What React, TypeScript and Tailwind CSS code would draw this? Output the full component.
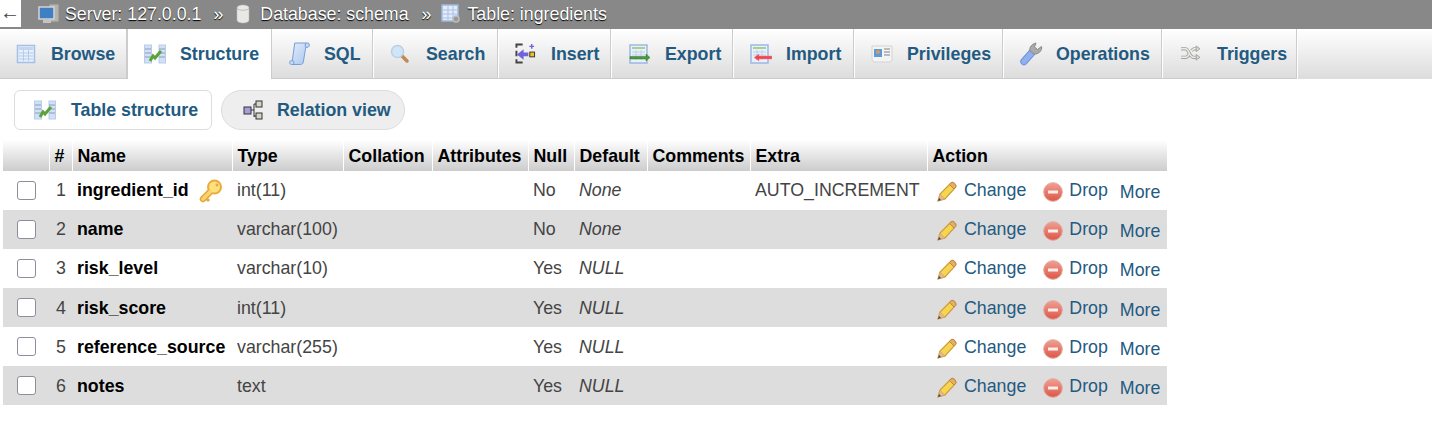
import React from "react";

type IconProps = { className?: string };

const TableIcon = () => (
  <svg viewBox="0 0 20 20" className="w-5 h-5">
    <rect x="1.500" y="1.500" width="17" height="17" fill="#e8f0fb" stroke="#a3bfe8" strokeWidth="1.500" />
    <rect x="3" y="3" width="14" height="3" fill="#c2d6f2" />
    <path d="M3 9h14M3 12h14M3 15h14M7.500 6v11M12.500 6v11" stroke="#b5cbec" />
  </svg>
);

const StructureIcon = ({ className = "w-[22px] h-5" }: IconProps) => (
  <svg viewBox="0 0 22 20" className={className}>
    <rect x="0.500" y="1" width="7" height="18" fill="#cfe0f7" stroke="#b9cdea" />
    <rect x="15" y="1" width="6.500" height="18" fill="#cfe0f7" stroke="#b9cdea" />
    <path d="M1 5h6M1 9h6M1 13h6M15 5h6M15 9h6M15 13h6" stroke="#8f9fb5" />
    <path d="M6 17l3-5 2 2 6-7" fill="none" stroke="#5aa33c" strokeWidth="3" />
  </svg>
);

const SqlIcon = () => (
  <svg viewBox="0 0 22 24" className="w-[21px] h-[23px]">
    <defs>
      <linearGradient id="sqlg" x1="0" y1="0" x2="1" y2="1">
        <stop offset="0" stopColor="#e2edfb" />
        <stop offset="1" stopColor="#a9c6ee" />
      </linearGradient>
    </defs>
    <path d="M6 1h14c1.500 0 2 3.500 0 4.500h-2.500L15 21c-.5 2-1.500 2.500-3 2.500H2.500C.5 23.500 0 20 2 19.500h1.500L6 1z" fill="url(#sqlg)" stroke="#6f9bd8" />
    <path d="M18 1c-1 1-1.500 3-.5 4.500M3.500 19.500c2 0 2 2.500 1 4" fill="none" stroke="#6f9bd8" />
  </svg>
);

const SearchIcon = () => (
  <svg viewBox="0 0 20 20" className="w-5 h-5">
    <path d="M11.500 11.500l5.500 5.500" stroke="#c08a50" strokeWidth="3.500" strokeLinecap="round" />
    <circle cx="7.500" cy="7.500" r="6" fill="#cfe6fa" stroke="#bccfdf" strokeWidth="1.500" />
  </svg>
);

const InsertIcon = () => (
  <svg viewBox="0 0 22 22" className="w-[21px] h-[21px]">
    <path d="M8 1.500H1.500V5M1.500 8v6M1.500 17v3.500H8" stroke="#444" strokeWidth="2" fill="none" />
    <path d="M2 12l7-5.500V10h5v4H9v3.500z" fill="#6f63d8" />
    <rect x="15.500" y="9.500" width="5" height="5" fill="#f0c020" stroke="#333" />
    <path d="M17.500 1v5M15 3.500h5" stroke="#6f63d8" strokeWidth="1.500" />
  </svg>
);

const ExportIcon = () => (
  <svg viewBox="0 0 22 20" className="w-[22px] h-5">
    <rect x="1" y="1" width="17" height="18" fill="#e8f0fb" stroke="#9db8e4" strokeWidth="1.500" />
    <rect x="3" y="3" width="13" height="2" fill="#a9d18e" />
    <path d="M3 8h13M3 11h13M7 6v10M12 6v10" stroke="#c0d0ea" />
    <path d="M1 12.500h16V10l4 3.500-4 3.500v-2H1z" fill="#4c9a3a" stroke="#2f7a24" strokeWidth="0.500" />
  </svg>
);

const ImportIcon = () => (
  <svg viewBox="0 0 22 20" className="w-[22px] h-5">
    <rect x="1" y="1" width="17" height="18" fill="#e8f0fb" stroke="#9db8e4" strokeWidth="1.500" />
    <rect x="3" y="3" width="13" height="2" fill="#a9d18e" />
    <path d="M3 8h13M3 11h13M7 6v10M12 6v10" stroke="#c0d0ea" />
    <path d="M22 12H9V10l-5 3.500 5 3.500v-2h13z" fill="#f2454f" stroke="#f08a8a" strokeWidth="0.500" />
  </svg>
);

const PrivilegesIcon = () => (
  <svg viewBox="0 0 22 18" className="w-[22px] h-[18px]">
    <path d="M1 1h20v14l-2 2H3l-2-2z" fill="#f4f4f4" stroke="#d4d4d4" />
    <rect x="3" y="4" width="8" height="8" fill="#5b9bd8" />
    <circle cx="7" cy="7" r="2" fill="#d89a5a" />
    <path d="M13 4h6M13 7h6M13 10h6" stroke="#a8a8a8" strokeWidth="1.500" />
  </svg>
);

const OperationsIcon = () => (
  <svg viewBox="0 0 24 24" className="w-6 h-6">
    <path d="M5 19.500l8-9" stroke="#6f93d8" strokeWidth="7.500" strokeLinecap="round" />
    <path d="M5 19.500l8-9" stroke="#8fb0ee" strokeWidth="5.500" strokeLinecap="round" />
    <path d="M11 9c-1-4 2-7 6-8l-1.500 4 3 2.500 4-3c1 4-3 8-7.500 7.500z" fill="#aaa" stroke="#8a8a8a" />
  </svg>
);

const TriggersIcon = () => (
  <svg viewBox="0 0 22 18" className="w-[21px] h-[17px]">
    <path d="M1 4h5c3 0 4 9 8 9h4M1 13h5c2 0 3-2 4-4M12 6c1-1 2-2 3-2h3" fill="none" stroke="#a3a39c" strokeWidth="3.500" />
    <path d="M1 4h5c3 0 4 9 8 9h4M1 13h5c2 0 3-2 4-4M12 6c1-1 2-2 3-2h3" fill="none" stroke="#ececea" strokeWidth="1.500" />
    <path d="M17 1l4 3-4 3zM17 10l4 3-4 3z" fill="#d8d8d4" stroke="#a3a39c" />
  </svg>
);

const RelationIcon = () => (
  <svg viewBox="0 0 20 20" className="w-5 h-5">
    <path d="M7 10h4M11 4v13M11 4h2M11 16h2" stroke="#333" fill="none" />
    <rect x="1" y="7" width="7" height="7" fill="#a79ed8" stroke="#333" />
    <rect x="13" y="1" width="6" height="6" fill="#d8d4c8" stroke="#333" />
    <rect x="13" y="13" width="6" height="6" fill="#d8d4c8" stroke="#333" />
  </svg>
);

const KeyIcon = () => (
  <svg viewBox="0 0 24 24" className="w-6 h-6 shrink-0">
    <path d="M13 11L4 20" stroke="#e8a33a" strokeWidth="6.500" strokeLinecap="round" />
    <path d="M7 21l2-2 2 2-2 2zM3 17l-2 2 2 2z" fill="#e8a33a" />
    <circle cx="15.500" cy="8" r="7.500" fill="#edaa3e" />
    <path d="M13 11L4 20" stroke="#f8d66e" strokeWidth="3.500" strokeLinecap="round" />
    <circle cx="15.500" cy="8" r="5.500" fill="#fbe07c" />
    <circle cx="18" cy="6" r="1.500" fill="#edaa3e" />
  </svg>
);

const PencilIcon = () => (
  <svg viewBox="0 0 22 22" className="w-[22px] h-[22px] shrink-0">
    <path d="M1 21l2-7L14 3c2-2 6 2 4.500 4.500L8 19z" fill="#f5d64e" stroke="#cf9a3e" strokeWidth="1.200" />
    <path d="M14 3c2-2 6 2 4.500 4.500l-1.500 1.500-4.500-4.500z" fill="#e6ae62" stroke="#b98a4c" />
    <path d="M1 21l2-7 5 5z" fill="#e2b98a" stroke="#c99a6a" strokeWidth="0.500" />
    <path d="M1 21l1-3 2 2z" fill="#444" />
  </svg>
);

const DropIcon = () => (
  <svg viewBox="0 0 20 20" className="w-5 h-5 shrink-0">
    <defs>
      <linearGradient id="dropg" x1="0" y1="0" x2="0" y2="1">
        <stop offset="0" stopColor="#f0a094" />
        <stop offset="1" stopColor="#dd5645" />
      </linearGradient>
    </defs>
    <circle cx="10" cy="10" r="9.300" fill="url(#dropg)" stroke="#e0a89e" />
    <rect x="5" y="8.500" width="10" height="3" fill="#fbeeea" />
  </svg>
);

const tabs = [
  { label: "Browse", icon: <TableIcon />, w: "w-[127px]", pl: "pl-[16px]", gap: "gap-[15px]" },
  { label: "Structure", icon: <StructureIcon />, w: "w-[145px]", pl: "pl-[16px]", gap: "gap-[14px]", active: true },
  { label: "SQL", icon: <SqlIcon />, w: "w-[101px]", pl: "pl-[17px]", gap: "gap-[14px]" },
  { label: "Search", icon: <SearchIcon />, w: "w-[125px]", pl: "pl-[17px]", gap: "gap-[16px]" },
  { label: "Insert", icon: <InsertIcon />, w: "w-[113px]", pl: "pl-[17px]", gap: "gap-[15px]" },
  { label: "Export", icon: <ExportIcon />, w: "w-[122px]", pl: "pl-[18px]", gap: "gap-[14px]" },
  { label: "Import", icon: <ImportIcon />, w: "w-[121px]", pl: "pl-[17px]", gap: "gap-[14px]" },
  { label: "Privileges", icon: <PrivilegesIcon />, w: "w-[149px]", pl: "pl-[17px]", gap: "gap-[14px]" },
  { label: "Operations", icon: <OperationsIcon />, w: "w-[159px]", pl: "pl-[16px]", gap: "gap-[13px]" },
  { label: "Triggers", icon: <TriggersIcon />, w: "w-[135px]", pl: "pl-[18px]", gap: "gap-[16px]" },
];

const headers = [
  { label: "", w: "w-[46px]" },
  { label: "#", w: "w-[23px]" },
  { label: "Name", w: "w-[160px]" },
  { label: "Type", w: "w-[111px]" },
  { label: "Collation", w: "w-[89px]" },
  { label: "Attributes", w: "w-[96px]" },
  { label: "Null", w: "w-[46px]" },
  { label: "Default", w: "w-[73px]" },
  { label: "Comments", w: "w-[103px]" },
  { label: "Extra", w: "w-[177px]" },
  { label: "Action", w: "w-[240px]" },
];

const rows = [
  { name: "ingredient_id", type: "int(11)", nul: "No", def: "None", extra: "AUTO_INCREMENT", pk: true },
  { name: "name", type: "varchar(100)", nul: "No", def: "None", extra: "" },
  { name: "risk_level", type: "varchar(10)", nul: "Yes", def: "NULL", extra: "" },
  { name: "risk_score", type: "int(11)", nul: "Yes", def: "NULL", extra: "" },
  { name: "reference_source", type: "varchar(255)", nul: "Yes", def: "NULL", extra: "" },
  { name: "notes", type: "text", nul: "Yes", def: "NULL", extra: "" },
];

export default function App() {
  return (
    <div className="min-h-[428px] bg-white font-['Liberation_Sans',Arial,sans-serif] text-[17.8px] text-[#444] overflow-hidden">
      {/* Breadcrumb */}
      <div className="h-[29px] bg-[#888] flex items-start text-white [text-shadow:0_1px_1px_#000]">
        <div className="w-[21px] h-[27px] bg-white text-[#444] flex items-center text-[20px] leading-none pb-[3px] [text-shadow:none]">
          ←
        </div>
        <div className="flex items-center h-[28px] pl-[17px]">
          <svg viewBox="0 0 22 22" className="w-[22px] h-[22px]">
            <rect x="11" y="1" width="10" height="18" fill="#b4b4ae" stroke="#8c8c86" />
            <rect x="1" y="4" width="15" height="12" fill="#3f7fc4" stroke="#d4d4d4" strokeWidth="1.500" />
            <rect x="5" y="17" width="8" height="3" fill="#c4c4c4" />
          </svg>
          <span className="ml-[5px]">Server: 127.0.0.1</span>
          <span className="ml-[12px]">»</span>
          <svg viewBox="0 0 16 20" className="w-4 h-5 ml-[12px]">
            <path d="M2 4c0-4 12-4 12 0v12c0 4-12 4-12 0z" fill="#e8e8e4" stroke="#bbb" strokeWidth="0.500" />
            <path d="M2 4c0 3 12 3 12 0" fill="none" stroke="#aaa" strokeWidth="0.700" />
          </svg>
          <span className="ml-[9px]">Database: schema</span>
          <span className="ml-[13px]">»</span>
          <svg viewBox="0 0 20 20" className="w-5 h-5 ml-[10px]">
            <rect x="1" y="1" width="16" height="16" fill="#e3ecfa" stroke="#9db8e0" strokeWidth="1.500" />
            <path d="M2 6h14M2 10h14M2 14h14M7 2v14M12 2v14" stroke="#a9c0e4" />
            <circle cx="15" cy="15" r="3" fill="#999" stroke="#bbb" strokeWidth="1.500" />
          </svg>
          <span className="ml-[6px]">Table: ingredients</span>
        </div>
      </div>

      {/* Tabs */}
      <div className="h-[50px] flex bg-gradient-to-b from-white to-[#dcdcdc] font-bold text-[#235a81]">
        {tabs.map((t) => (
          <div
            key={t.label}
            className={`${t.w} ${t.pl} ${t.gap} h-full flex items-center whitespace-nowrap ${
              t.active
                ? "bg-white border-x border-[#ccc]"
                : "border-r border-r-[#ccc] border-b border-b-[#ccc] shadow-[1px_0_0_#fff]"
            }`}
          >
            {t.icon}
            <span className="pt-[1px]">{t.label}</span>
          </div>
        ))}
      </div>

      {/* Sub tabs */}
      <div className="flex items-center gap-[9px] pl-[14px] pt-[11px] font-bold text-[#235a81]">
        <div className="w-[198px] h-10 flex items-center gap-[15px] pl-[19px] bg-white border border-[#ddd] rounded-[6px]">
          <StructureIcon />
          <span>Table structure</span>
        </div>
        <div className="w-[184px] h-10 flex items-center gap-[14px] pl-[21px] bg-[#eee] border border-[#ddd] rounded-[20px]">
          <RelationIcon />
          <span>Relation view</span>
        </div>
      </div>

      {/* Structure table */}
      <table className="ml-[3px] mt-[10px] w-[1164px] table-fixed border-collapse">
        <thead>
          <tr className="h-[31px] bg-gradient-to-b from-white to-[#ccc] text-black font-bold text-left">
            {headers.map((h) => (
              <th key={h.label || "check"} className={`${h.w} pl-[5px] pt-[1px] pb-0 pr-0 border-r border-r-white last:border-r-0 font-bold`}>
                {h.label}
              </th>
            ))}
          </tr>
        </thead>
        <tbody>
          {rows.map((r, i) => {
            // the last three rows sit a pixel lower in the reference
            const top = i >= 3 ? "pt-[2px]" : "pt-0";
            return (
              <tr key={r.name} className={`h-[39px] ${i % 2 === 1 ? "bg-[#ddd]" : "bg-white"}`}>
                <td className="p-0 pl-[14px]">
                  <div className="w-[19px] h-[19px] bg-white border border-[#8e8e9a] rounded-[3px]" />
                </td>
                <td className={`p-0 pl-[7px] ${top}`}>{i + 1}</td>
                <td className={`p-0 pl-[5px] ${top} text-black font-bold whitespace-nowrap`}>
                  <span className="flex items-center gap-[10px]">
                    {r.name}
                    {r.pk && <KeyIcon />}
                  </span>
                </td>
                <td className={`p-0 pl-[5px] ${top}`}>{r.type}</td>
                <td />
                <td />
                <td className={`p-0 pl-[5px] ${top}`}>{r.nul}</td>
                <td className={`p-0 pl-[5px] ${top} italic`}>{r.def}</td>
                <td />
                <td className={`p-0 pl-[5px] ${top} whitespace-nowrap`}>{r.extra}</td>
                <td className={`p-0 pl-[10px] ${i >= 3 ? "pt-[1px]" : "pt-0"} text-[#235a81]`}>
                  <div className={`flex items-start ${i >= 3 ? "h-[38px]" : "h-[39px]"} leading-[20px]`}>
                    <span className="mt-[9px]">
                      <PencilIcon />
                    </span>
                    <span className="ml-[5px] mt-[9px]">Change</span>
                    <span className="ml-[17px] mt-[11px]">
                      <DropIcon />
                    </span>
                    <span className="ml-[6px] mt-[9px]">Drop</span>
                    <span className="ml-[12px] mt-[11px]">More</span>
                  </div>
                </td>
              </tr>
            );
          })}
        </tbody>
      </table>
    </div>
  );
}
